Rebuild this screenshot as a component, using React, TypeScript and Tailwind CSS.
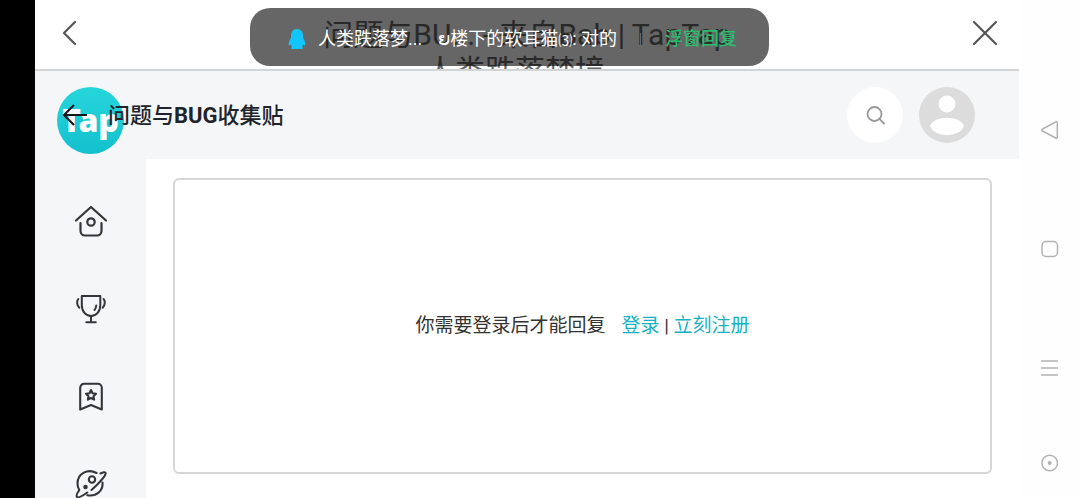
import type { ReactNode } from 'react';

const iconProps = {
  fill: 'none',
  stroke: 'currentColor',
  strokeLinecap: 'round' as const,
  strokeLinejoin: 'round' as const,
  'aria-hidden': true,
};

function HomeIcon() {
  return (
    <svg {...iconProps} viewBox="0 0 34 34" strokeWidth="2.2" className="h-[34px] w-[34px]">
      <path d="M2 16.5 17 3l15 13.5" />
      <path d="M6.5 19v8a4.500 4.500 0 0 0 4.500 4.500h12a4.500 4.500 0 0 0 4.500-4.500v-8" />
      <circle cx="17" cy="18" r="3.700" />
    </svg>
  );
}

function TrophyIcon() {
  return (
    <svg {...iconProps} viewBox="0 0 34 34" strokeWidth="2" className="h-[34px] w-[34px]">
      <path d="M7.800 4h18.500v9c0 6.500-4 11-9.250 11s-9.250-4.500-9.250-11z" />
      <path d="M17 24v6M12.300 30.300h9.500M22.300 13.500c-.2 2-.8 3.300-1.800 4.500" />
      <path d="M4.300 7C2.500 8.500 2.700 13.500 5.300 15.800M29.600 7c1.800 1.500 1.600 6.500-1 8.800" />
    </svg>
  );
}

function BookmarkIcon() {
  return (
    <svg {...iconProps} viewBox="0 0 34 34" strokeWidth="2.1" className="h-[34px] w-[34px]">
      <path d="M6.200 29.500V7.800a4 4 0 0 1 4-4h13.600a4 4 0 0 1 4 4v21.700L17 25z" />
      <path d="m17 10 1.500 3.200 3.500.5-2.500 2.500.6 3.500-3.100-1.700-3.100 1.700.6-3.500-2.500-2.500 3.500-.5z" />
    </svg>
  );
}

function PlanetIcon() {
  return (
    <svg {...iconProps} viewBox="0 0 34 34" strokeWidth="2.1" className="h-[34px] w-[34px]">
      <path d="M22.500 5C14 .5 3.500 5 3.500 15.500c0 3 .8 5 1.800 6.500-2.500 3.500-3.200 6-2.200 7 1.200 1.200 5.200-1 10.200-4.500" />
      <path d="M26.500 5.500c2.800-1.300 4.500-1.500 5-.7 1 1.800-5.200 9.200-14 17.200M28.500 14.500c.8 8-6 14.500-15.200 12.700" />
      <circle cx="18" cy="11.500" r="3.200" />
      <circle cx="11.500" cy="19" r="1.200" fill="currentColor" />
    </svg>
  );
}

function SideLink({ label, children }: { label: string; children: ReactNode }) {
  return (
    <a href="#" aria-label={label} className="flex text-[#333538]">
      {children}
    </a>
  );
}

function Notification() {
  return (
    <div className="absolute left-1/2 top-2 flex h-[58px] w-[519px] -translate-x-[277px] items-center rounded-[20px] bg-black/60 pt-1 pl-[38px] text-lg text-white">
      <svg viewBox="0 0 18 22" className="h-[22px] w-[18px] shrink-0" fill="#12c6fb" aria-hidden="true">
        <path d="M9 1c-4 0-6 3-6 7v2C1 12.500.3 15.500.8 17.200c.2.700 1 .3 1.900-.9.200 1 .7 2 1.300 2.700-1.300.6-1.400 2 .4 2h9.200c1.800 0 1.700-1.400.4-2 .6-.7 1.100-1.700 1.300-2.700.9 1.200 1.700 1.600 1.900.9.500-1.700-.2-4.700-2.200-7.200V8c0-4-2-7-6-7z" />
      </svg>
      <span className="ml-3 whitespace-nowrap">人类跌落梦...</span>
      <span className="ml-4 flex-1 whitespace-nowrap">
        ຍ楼下的软耳猫<span className="text-sm">⑶</span>: 对的
      </span>
      <span className="h-3 w-px bg-white/30" />
      <button type="button" className="mr-8 ml-6 whitespace-nowrap font-medium text-[#2dbd70]">
        浮窗回复
      </button>
    </div>
  );
}

function TitleBar() {
  return (
    <header className="relative flex h-[71px] shrink-0 items-start justify-between overflow-hidden border-b-2 border-[#d3d4d6] bg-white text-[#555]">
      <button type="button" aria-label="返回" className="ml-6 mt-[18px]">
        <svg {...iconProps} viewBox="0 0 20 30" strokeWidth="2.2" className="h-[30px] w-5">
          <path d="M16 4 5 15l11 11" />
        </svg>
      </button>
      <h1 className="mt-[17px] w-[440px] pl-1 text-center text-[30px] leading-9 text-[#666]">
        问题与BU... - 来自Bab | TapTap
        <br />
        人类跌落梦境...
      </h1>
      <button type="button" aria-label="关闭" className="mr-5 mt-[19px]">
        <svg {...iconProps} viewBox="0 0 28 28" strokeWidth="2.200" className="h-7 w-7">
          <path d="M3 3 25 25M25 3 3 25" />
        </svg>
      </button>
      <Notification />
    </header>
  );
}

function PageHeader() {
  return (
    <div className="flex h-[88px] shrink-0 items-center bg-[#f5f6f8] pr-11 pl-[22px]">
      <a
        href="#"
        aria-label="TapTap"
        className="mt-2.5 flex h-[67px] w-[67px] shrink-0 items-center justify-center rounded-full bg-linear-to-b from-[#25d6dc] to-[#13c0ce] font-['Noto_Sans'] text-[32px] font-black text-white"
      >
        Tap
      </a>
      <button type="button" aria-label="后退" className="relative -ml-[62px] text-[#15191e]">
        <svg {...iconProps} viewBox="0 0 26 24" strokeWidth="2.200" strokeLinecap="butt" strokeLinejoin="miter" className="h-6 w-[26px]">
          <path d="M12 2 2 12l10 10M2 12h23" />
        </svg>
      </button>
      <h2 className="relative ml-5 flex-1 text-[22px] font-medium text-[#20242a]">
        问题与<b>BUG</b>收集贴
      </h2>
      <button
        type="button"
        aria-label="搜索"
        className="flex h-14 w-14 items-center justify-center rounded-full bg-white text-[#999]"
      >
        <svg {...iconProps} viewBox="0 0 20 20" strokeWidth="1.800" className="h-5 w-5">
          <circle cx="9.500" cy="9" r="7" />
          <path d="m14.700 14.200 4.300 4.300" />
        </svg>
      </button>
      <button type="button" aria-label="用户" className="ml-4">
        <svg viewBox="0 0 56 56" className="h-14 w-14" aria-hidden="true">
          <circle cx="28" cy="28" r="28" fill="#dcdcdc" />
          <circle cx="28" cy="17" r="8.500" fill="#fff" />
          <path d="M11 39c4-11 30-11 34 0-4 12-30 12-34 0z" fill="#fff" />
        </svg>
      </button>
    </div>
  );
}

function SystemNav() {
  return (
    <nav aria-label="系统导航" className="flex w-[61px] shrink-0 flex-col items-center bg-[#fefefe] pt-[120px] text-[#b2b2b2]">
      <button type="button" aria-label="返回上一级">
        <svg {...iconProps} viewBox="0 0 20 20" strokeWidth="1.500" className="h-5 w-5">
          <path d="M17.300 3v14c0 1-.8 1.500-1.600 1L2.500 11c-1-.5-1-1.500 0-2l13.200-7c.8-.5 1.600 0 1.600 1z" />
        </svg>
      </button>
      <button type="button" aria-label="主屏幕" className="mt-[99px]">
        <svg {...iconProps} viewBox="0 0 20 20" strokeWidth="1.500" className="h-5 w-5">
          <rect x="2" y="2.500" width="15.500" height="15" rx="4" />
        </svg>
      </button>
      <button type="button" aria-label="最近任务" className="mt-[99px]">
        <svg {...iconProps} viewBox="0 0 20 20" strokeWidth="1.300" className="h-5 w-5">
          <path d="M1.500 3h16M1.500 10h16M1.500 17h16" />
        </svg>
      </button>
      <button type="button" aria-label="辅助" className="mt-[75px]">
        <svg {...iconProps} viewBox="0 0 20 20" strokeWidth="1.500" className="h-5 w-5">
          <circle cx="9.700" cy="10" r="7.800" />
          <circle cx="9.700" cy="10" r="1.200" fill="currentColor" />
        </svg>
      </button>
    </nav>
  );
}

export default function App() {
  return (
    <div className="flex h-screen overflow-hidden bg-black font-[Roboto,'Noto_Sans_CJK_SC',sans-serif]">
      <div className="w-[35px] shrink-0" />
      <div className="flex min-w-0 flex-1 flex-col bg-white">
        <TitleBar />
        <PageHeader />
        <div className="flex min-h-0 flex-1">
          <nav aria-label="主导航" className="flex w-[111px] shrink-0 flex-col items-center gap-[54px] overflow-hidden bg-[#f5f6f8] pt-[45px]">
            <SideLink label="首页"><HomeIcon /></SideLink>
            <SideLink label="排行榜"><TrophyIcon /></SideLink>
            <SideLink label="收藏"><BookmarkIcon /></SideLink>
            <SideLink label="发现"><PlanetIcon /></SideLink>
          </nav>
          <main className="flex flex-1 pt-[19px] pr-[27px] pb-6 pl-[27px]">
            <div className="flex flex-1 items-center justify-center rounded-md border-2 border-[#d6d6d6] text-[19px] text-[#333]">
              <p>
                你需要登录后才能回复
                <a href="#" className="ml-4 text-[#15b1c1]">登录</a>
                {' | '}
                <a href="#" className="text-[#15b1c1]">立刻注册</a>
              </p>
            </div>
          </main>
        </div>
      </div>
      <SystemNav />
    </div>
  );
}
